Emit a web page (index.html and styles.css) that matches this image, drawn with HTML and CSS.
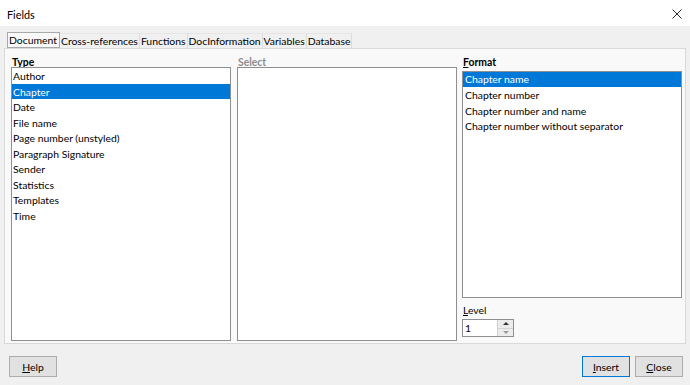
FILE: index.html
```html
<!DOCTYPE html>
<html>
<head>
<meta charset="utf-8">
<title>Fields</title>
<link rel="stylesheet" href="styles.css">
</head>
<body>
<div class="dialog">
  <div class="titlebar">
    <span class="title">Fields</span>
    <svg class="close-x" width="10" height="10" viewBox="0 0 10 10"><path d="M0.5 0.5 L9.5 9.5 M9.5 0.5 L0.5 9.5" stroke="#2b2b2b" stroke-width="1" fill="none"/></svg>
  </div>
  <div class="tabs">
    <div class="tab active">Document</div>
    <div class="tab">Cross-references</div>
    <div class="tab">Functions</div>
    <div class="tab">DocInformation</div>
    <div class="tab">Variables</div>
    <div class="tab">Database</div>
  </div>
  <div class="tabpage">
    <div class="col col-type">
      <div class="label"><span class="u">T</span>ype</div>
      <div class="list list-type">
        <div class="item">Author</div>
        <div class="item sel">Chapter</div>
        <div class="item">Date</div>
        <div class="item">File name</div>
        <div class="item">Page number (unstyled)</div>
        <div class="item">Paragraph Signature</div>
        <div class="item">Sender</div>
        <div class="item">Statistics</div>
        <div class="item">Templates</div>
        <div class="item">Time</div>
      </div>
    </div>
    <div class="col col-select">
      <div class="label disabled">Select</div>
      <div class="list list-select"></div>
    </div>
    <div class="col col-format">
      <div class="label"><span class="u">F</span>ormat</div>
      <div class="list list-format">
        <div class="item sel">Chapter name</div>
        <div class="item">Chapter number</div>
        <div class="item">Chapter number and name</div>
        <div class="item">Chapter number without separator</div>
      </div>
      <div class="label level-label"><span class="u">L</span>evel</div>
      <div class="spin">
        <div class="spin-input">1</div>
        <div class="spin-btns">
          <div class="spin-btn up"><span class="tri-up"></span></div>
          <div class="spin-btn down"><span class="tri-down"></span></div>
        </div>
      </div>
    </div>
  </div>
  <div class="buttons">
    <div class="btn"><span class="u">H</span>elp</div>
    <div class="spacer"></div>
    <div class="btn default"><span class="u">I</span>nsert</div>
    <div class="btn"><span class="u">C</span>lose</div>
  </div>
</div>
</body>
</html>
```
FILE: styles.css
```css
html, body {
  margin: 0;
  padding: 0;
}
body {
  width: 690px;
  height: 385px;
  overflow: hidden;
  background: #f0f0f0;
  font-family: Lato, "Liberation Sans", Arial, sans-serif;
  font-size: 10.4px;
  color: #000;
}
.dialog {
  width: 690px;
  height: 385px;
  display: flex;
  flex-direction: column;
}
.titlebar {
  height: 26px;
  background: #fff;
  display: flex;
  align-items: center;
  justify-content: space-between;
  padding: 0 8px 0 7px;
}
.title {
  color: #000;
  font-size: 10.8px;
  padding-top: 2px;
}
.close-x {
  display: block;
  margin-top: 1px;
}
.tabs {
  display: flex;
  margin-top: 6px;
  padding-left: 7px;
  height: 16px;
  align-items: flex-end;
  position: relative;
  z-index: 1;
}
.tab {
  height: 15px;
  line-height: 15px;
  padding: 0 1px 0 1px;
  border-right: 1px solid #dcdcdc;
  border-top: 1px solid #e6e6e6;
  box-sizing: border-box;
  background: #f0f0f0;
  white-space: nowrap;
}
.tab.active {
  height: 16px;
  line-height: 15px;
  border: 1px solid #a9a9a9;
  background: #f9f9f9;
  padding: 0 2px 0 1px;
}
.tabpage {
  margin: 0 4px 0 4px;
  height: 296px;
  box-sizing: border-box;
  border: 1px solid #d9d9d9;
  background: #f9f9f9;
  display: flex;
  padding: 6px 2px 2px 6px;
}
.col {
  display: flex;
  flex-direction: column;
  width: 220px;
}
.col-select {
  margin-left: 6px;
}
.col-format {
  margin-left: 5px;
}
.label {
  font-weight: bold;
  height: 12px;
  line-height: 14px;
  padding-left: 1px;
}
.label.disabled {
  color: #8d8d8d;
}
.u {
  text-decoration: underline;
}
.list {
  background: #fff;
  border: 1px solid #8f8f8f;
  box-sizing: border-box;
  overflow: hidden;
}
.list-type,
.list-select {
  height: 274px;
}
.list-format {
  margin-top: 4px;
  height: 227px;
}
.item {
  height: 15.5px;
  line-height: 16px;
  padding-left: 1px;
  white-space: nowrap;
}
.list-format .item {
  padding-left: 2px;
}
.item.sel {
  background: #0078d7;
  color: #fff;
}
.list-format .item.sel {
  height: 15px;
  line-height: 15px;
}
.level-label {
  font-weight: normal;
  margin-top: 5px;
}
.spin {
  margin-top: 4px;
  display: flex;
  height: 18px;
  width: 52px;
  border: 1px solid #8f8f8f;
  box-sizing: border-box;
  background: #fff;
}
.spin-input {
  flex: 1;
  line-height: 16px;
  padding-left: 2px;
}
.spin-btns {
  width: 15px;
  display: flex;
  flex-direction: column;
  border-left: 1px solid #cfcfcf;
}
.spin-btn {
  flex: 1;
  background: #ececec;
  display: flex;
  align-items: center;
  justify-content: center;
}
.spin-btn.up {
  border-bottom: 1px solid #d4d4d4;
}
.tri-up {
  width: 0;
  height: 0;
  border-left: 3px solid transparent;
  border-right: 3px solid transparent;
  border-bottom: 3px solid #333;
}
.tri-down {
  width: 0;
  height: 0;
  border-left: 3px solid transparent;
  border-right: 3px solid transparent;
  border-top: 3px solid #9a9a9a;
}
.buttons {
  display: flex;
  margin-top: 12px;
  padding: 0 7px 0 9px;
  gap: 5px;
}
.spacer {
  flex: 1;
}
.btn {
  width: 48px;
  height: 21px;
  box-sizing: border-box;
  border: 1px solid #adadad;
  background: #e1e1e1;
  text-align: center;
  line-height: 20px;
}
.btn.default {
  border: 1px solid #0078d7;
}
```
